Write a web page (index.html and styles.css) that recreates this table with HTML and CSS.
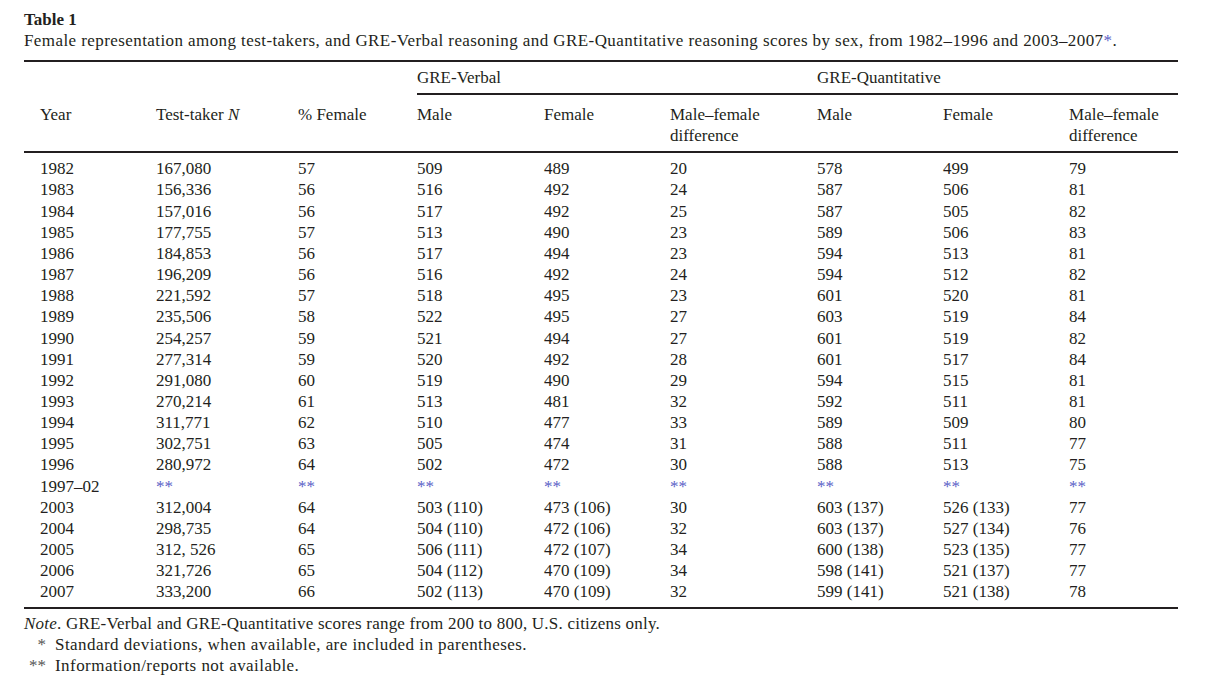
FILE: index.html
```html
<!DOCTYPE html>
<html lang="en">
<head>
<meta charset="utf-8">
<title>Table 1</title>
<link rel="stylesheet" href="styles.css">
</head>
<body>
<div class="wrap">
  <div class="title">Table 1</div>
  <div class="caption">Female representation among test-takers, and GRE-Verbal reasoning and GRE-Quantitative reasoning scores by sex, from 1982–1996 and 2003–2007<span class="ast">*</span>.</div>
  <table class="data">
    <colgroup>
      <col class="c1"><col class="c2"><col class="c3"><col class="c4"><col class="c5"><col class="c6"><col class="c7"><col class="c8"><col class="c9">
    </colgroup>
    <thead>
      <tr class="group">
        <th></th><th></th><th></th>
        <th colspan="3" class="grp grp-v"><div class="grp-line">GRE-Verbal</div></th>
        <th colspan="3" class="grp grp-q"><div class="grp-line">GRE-Quantitative</div></th>
      </tr>
      <tr class="heads">
        <th>Year</th>
        <th>Test-taker <i>N</i></th>
        <th>% Female</th>
        <th>Male</th>
        <th>Female</th>
        <th>Male–female<br>difference</th>
        <th>Male</th>
        <th>Female</th>
        <th>Male–female<br>difference</th>
      </tr>
    </thead>
    <tbody>
      <tr class="first"><td>1982</td><td>167,080</td><td>57</td><td>509</td><td>489</td><td>20</td><td>578</td><td>499</td><td>79</td></tr>
      <tr><td>1983</td><td>156,336</td><td>56</td><td>516</td><td>492</td><td>24</td><td>587</td><td>506</td><td>81</td></tr>
      <tr><td>1984</td><td>157,016</td><td>56</td><td>517</td><td>492</td><td>25</td><td>587</td><td>505</td><td>82</td></tr>
      <tr><td>1985</td><td>177,755</td><td>57</td><td>513</td><td>490</td><td>23</td><td>589</td><td>506</td><td>83</td></tr>
      <tr><td>1986</td><td>184,853</td><td>56</td><td>517</td><td>494</td><td>23</td><td>594</td><td>513</td><td>81</td></tr>
      <tr><td>1987</td><td>196,209</td><td>56</td><td>516</td><td>492</td><td>24</td><td>594</td><td>512</td><td>82</td></tr>
      <tr><td>1988</td><td>221,592</td><td>57</td><td>518</td><td>495</td><td>23</td><td>601</td><td>520</td><td>81</td></tr>
      <tr><td>1989</td><td>235,506</td><td>58</td><td>522</td><td>495</td><td>27</td><td>603</td><td>519</td><td>84</td></tr>
      <tr><td>1990</td><td>254,257</td><td>59</td><td>521</td><td>494</td><td>27</td><td>601</td><td>519</td><td>82</td></tr>
      <tr><td>1991</td><td>277,314</td><td>59</td><td>520</td><td>492</td><td>28</td><td>601</td><td>517</td><td>84</td></tr>
      <tr><td>1992</td><td>291,080</td><td>60</td><td>519</td><td>490</td><td>29</td><td>594</td><td>515</td><td>81</td></tr>
      <tr><td>1993</td><td>270,214</td><td>61</td><td>513</td><td>481</td><td>32</td><td>592</td><td>511</td><td>81</td></tr>
      <tr><td>1994</td><td>311,771</td><td>62</td><td>510</td><td>477</td><td>33</td><td>589</td><td>509</td><td>80</td></tr>
      <tr><td>1995</td><td>302,751</td><td>63</td><td>505</td><td>474</td><td>31</td><td>588</td><td>511</td><td>77</td></tr>
      <tr><td>1996</td><td>280,972</td><td>64</td><td>502</td><td>472</td><td>30</td><td>588</td><td>513</td><td>75</td></tr>
      <tr><td>1997–02</td><td class="ast">**</td><td class="ast">**</td><td class="ast">**</td><td class="ast">**</td><td class="ast">**</td><td class="ast">**</td><td class="ast">**</td><td class="ast">**</td></tr>
      <tr><td>2003</td><td>312,004</td><td>64</td><td>503 (110)</td><td>473 (106)</td><td>30</td><td>603 (137)</td><td>526 (133)</td><td>77</td></tr>
      <tr><td>2004</td><td>298,735</td><td>64</td><td>504 (110)</td><td>472 (106)</td><td>32</td><td>603 (137)</td><td>527 (134)</td><td>76</td></tr>
      <tr><td>2005</td><td>312, 526</td><td>65</td><td>506 (111)</td><td>472 (107)</td><td>34</td><td>600 (138)</td><td>523 (135)</td><td>77</td></tr>
      <tr><td>2006</td><td>321,726</td><td>65</td><td>504 (112)</td><td>470 (109)</td><td>34</td><td>598 (141)</td><td>521 (137)</td><td>77</td></tr>
      <tr class="last"><td>2007</td><td>333,200</td><td>66</td><td>502 (113)</td><td>470 (109)</td><td>32</td><td>599 (141)</td><td>521 (138)</td><td>78</td></tr>
    </tbody>
  </table>
  <div class="notes">
    <div class="note"><i>Note</i>. GRE-Verbal and GRE-Quantitative scores range from 200 to 800, U.S. citizens only.</div>
    <div class="fn"><span class="mark">*</span><span class="fn-text">Standard deviations, when available, are included in parentheses.</span></div>
    <div class="fn"><span class="mark">**</span><span class="fn-text">Information/reports not available.</span></div>
  </div>
</div>
</body>
</html>
```
FILE: styles.css
```css
html, body {
  margin: 0;
  padding: 0;
  background: #ffffff;
}
body {
  font-family: "Liberation Serif", "Times New Roman", serif;
  font-size: 17px;
  line-height: 21.15px;
  color: #231f20;
}
.wrap {
  padding: 9px 0 0 24px;
  width: 1154px;
}
.title {
  font-weight: bold;
}
.caption {
  margin-bottom: 8.5px;
  letter-spacing: 0.42px;
}
.ast {
  color: #5b5fc7;
}
.data {
  width: 1154px;
  border-collapse: collapse;
  table-layout: fixed;
  border-top: 2px solid #231f20;
  border-bottom: 2px solid #231f20;
}
.c1 { width: 132px; }
.c2 { width: 142px; }
.c3 { width: 119px; }
.c4 { width: 127px; }
.c5 { width: 126px; }
.c6 { width: 147px; }
.c7 { width: 126px; }
.c8 { width: 126px; }
.c9 { width: 109px; }
.data th, .data td {
  padding: 0;
  text-align: left;
  vertical-align: top;
  font-weight: normal;
  white-space: nowrap;
}
.data th:first-child, .data td:first-child {
  padding-left: 16px;
}
.group th {
  padding-top: 5px;
}
.grp-v { padding-right: 81px; }
.grp-q { padding-right: 9px; }
.grp-line {
  border-bottom: 2px solid #231f20;
  padding-bottom: 5px;
}
.heads th {
  padding-top: 9px;
  padding-bottom: 5px;
  border-bottom: 2px solid #231f20;
}
.first td {
  padding-top: 5px;
}
.last td {
  padding-bottom: 4px;
}
.notes {
  padding-top: 4px;
  line-height: 21.3px;
}
.note {
  letter-spacing: 0.22px;
}
.fn {
  display: flex;
}
.fn .mark {
  width: 22px;
  margin-right: 9px;
  text-align: right;
  color: #555555;
}
.fn-text {
  letter-spacing: 0.45px;
}
```
